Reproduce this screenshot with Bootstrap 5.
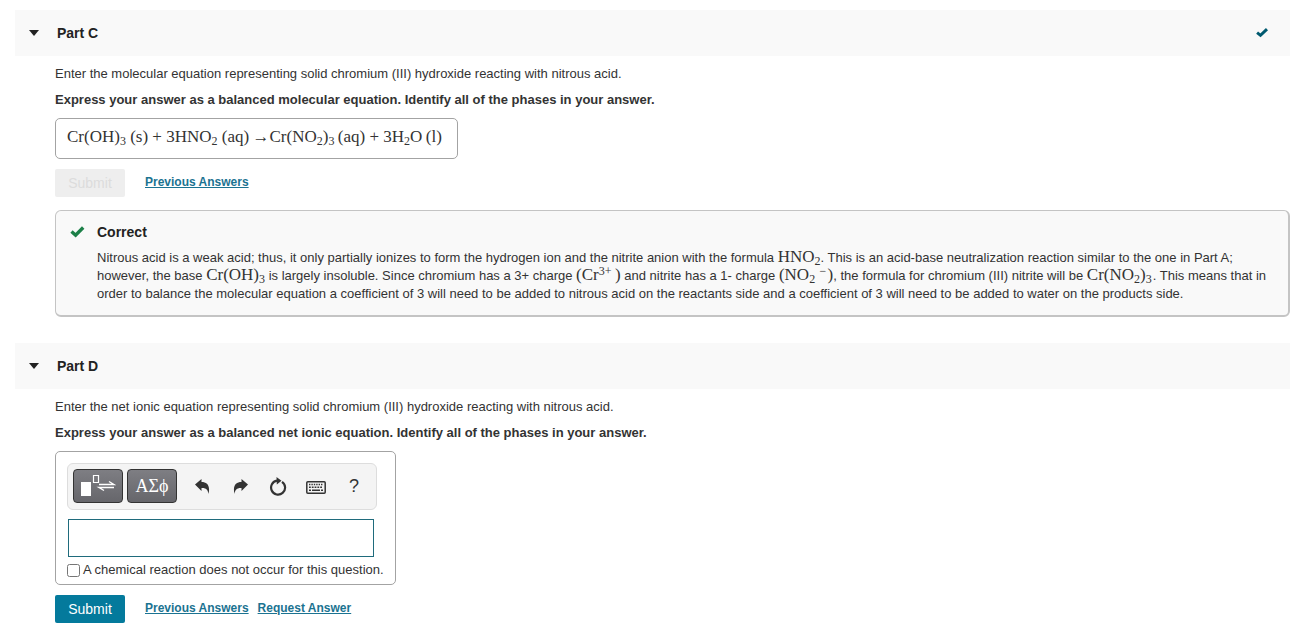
<!DOCTYPE html>
<html lang="en">
<head>
<meta charset="utf-8">
<meta name="viewport" content="width=device-width, initial-scale=1">
<title>Part C and Part D</title>
<link href="https://cdn.jsdelivr.net/npm/bootstrap@5.3.0/dist/css/bootstrap.min.css" rel="stylesheet">
<style>
  body { font-family: "Liberation Sans", Arial, sans-serif; font-size: 13px; line-height: 18px; color: #333; }
  .page { padding: 10px 3px 4px 15px; }
  .part + .part { margin-top: 26px; }
  .part-head { height: 46px; padding: 0 22px 0 14px; gap: 18px; background: #f9f9f9; }
  .part-title { font-size: 14px; line-height: 18px; font-weight: 700; color: #222; }
  .toggle { width: 10px; height: 10px; padding: 0; border: 0; background: transparent; line-height: 0; }
  .part-body { padding: 9px 0 0 40px; }
  .part-body p { margin: 0 0 8px; }
  .framed { margin-top: 9px; border: 1px solid #a3a3a3; border-radius: 5px; background: #fff; }
  .eq { font-family: "Liberation Serif", "Times New Roman", serif; font-size: 17px; line-height: 18px; white-space: nowrap; }
  .eq sub, .eq sup { font-size: 12px; line-height: 0; }
  .eq sub { bottom: -3px; }
  .eq sup { top: -5px; }
  .answer-box { width: fit-content; height: 41px; padding: 0 15px 4px 11px; }
  .actions { margin-top: 10px; gap: 9px; }
  .submit { width: 70px; height: 28px; margin-right: 11px; padding: 0; border: 0; border-radius: 2px; font-size: 14px; line-height: 18px; background: #047a9c; color: #fff; }
  .submit:disabled { background: #eee; color: #dcdcdc; }
  .answer-link { padding-bottom: 2px; font-size: 12px; line-height: 16px; font-weight: 700; color: #1b7391; }
  .feedback { margin-top: 13px; padding: 12px 16px 12px 14px; border: 1px solid #c4c4c4; border-right-width: 2px; border-bottom-width: 2px; border-radius: 6px; background: #f9f9f9; }
  .feedback-head { gap: 12px; }
  .feedback p { margin: 8px 0 0 27px; }
  .feedback .eq { line-height: 14px; }
  .editor { width: fit-content; padding: 11px 11px 5px 11px; }
  .tools { width: 310px; height: 47px; padding: 0 0 2px 5px; border: 1px solid #ddd; border-radius: 6px; background: #f4f4f4; }
  .tool-dark { width: 50px; height: 34px; padding: 0; border: 1px solid #333; border-radius: 4px; background: linear-gradient(#7e7e83, #66666b); color: #fff; font-family: "Liberation Serif", serif; font-size: 18px; line-height: 30px; }
  .tool { width: 38px; height: 34px; padding: 0; border: 0; background: transparent; color: #333; font-size: 18px; line-height: 30px; }
  .tool-icons { margin-left: 6px; }
  .entry { display: block; width: 306px; height: 38px; margin: 9px 0 4px 1px; padding: 0 8px; border: 1px solid #1f6b7c; }
  .no-reaction { gap: 3px; }
  .tick { width: 13px; height: 13px; margin: 0; }
</style>
</head>
<body>
<main class="page">
  <section class="part">
    <header class="part-head d-flex align-items-center">
      <button class="toggle" type="button" aria-label="Collapse Part C"><svg width="10" height="6" viewBox="0 0 10 6"><path d="M0 0h10L5 6z" fill="#222"/></svg></button>
      <h2 class="part-title mb-0">Part C</h2>
      <svg class="ms-auto" width="12" height="10" viewBox="0 0 12 10" aria-label="Complete"><path d="M1.100 4.600 4.500 7.300 11 1.200" fill="none" stroke="#005a70" stroke-width="3"/></svg>
    </header>
    <div class="part-body">
      <p>Enter the molecular equation representing solid chromium (III) hydroxide reacting with nitrous acid.</p>
      <p><strong>Express your answer as a balanced molecular equation. Identify all of the phases in your answer.</strong></p>
      <div class="framed answer-box d-flex align-items-center">
        <span class="eq">Cr(OH)<sub>3</sub> (s) + 3HNO<sub>2</sub> (aq)&#8201;→Cr(NO<sub>2</sub>)<sub>3</sub>&#8201;(aq) + 3H<sub>2</sub>O&#8201;(l)</span>
      </div>
      <div class="actions d-flex align-items-center">
        <button class="submit" type="button" disabled>Submit</button>
        <a class="answer-link" href="#">Previous Answers</a>
      </div>
      <div class="feedback">
        <div class="feedback-head d-flex align-items-center">
          <svg width="15" height="12" viewBox="0 0 15 12" aria-hidden="true"><path d="M1.500 5.500 5.600 9.200 13.200 1.500" fill="none" stroke="#1c8048" stroke-width="3.400"/></svg>
          <h3 class="part-title mb-0">Correct</h3>
        </div>
        <p>Nitrous acid is a weak acid; thus, it only partially ionizes to form the hydrogen ion and the nitrite anion with the formula <span class="eq">HNO<sub>2</sub></span>. This is an acid-base neutralization reaction similar to the one in Part A; however, the base <span class="eq">Cr(OH)<sub>3</sub></span> is largely insoluble. Since chromium has a 3+ charge <span class="eq">(Cr<sup>3+</sup>&#8201;)</span> and nitrite has a 1- charge <span class="eq">(NO<sub>2</sub> <sup>−</sup>&#8202;)</span>, the formula for chromium (III) nitrite will be <span class="eq">Cr(NO<sub>2</sub>)<sub>3</sub></span>&#8202;. This means that in order to balance the molecular equation a coefficient of 3 will need to be added to nitrous acid on the reactants side and a coefficient of 3 will need to be added to water on the products side.</p>
      </div>
    </div>
  </section>

  <section class="part">
    <header class="part-head d-flex align-items-center">
      <button class="toggle" type="button" aria-label="Collapse Part D"><svg width="10" height="6" viewBox="0 0 10 6"><path d="M0 0h10L5 6z" fill="#222"/></svg></button>
      <h2 class="part-title mb-0">Part D</h2>
    </header>
    <div class="part-body">
      <p>Enter the net ionic equation representing solid chromium (III) hydroxide reacting with nitrous acid.</p>
      <p><strong>Express your answer as a balanced net ionic equation. Identify all of the phases in your answer.</strong></p>
      <div class="framed editor">
        <div class="tools d-flex align-items-center">
          <div class="d-flex gap-1">
            <button class="tool-dark" type="button" aria-label="Templates">
              <svg class="d-block mx-auto" width="36" height="26" viewBox="0 0 36 26" fill="none" stroke="#fff"><path d="M1 9h10v14H1z" fill="#fff" stroke="none"/><path d="M13.500 2.500h5v7h-5z" stroke-width="1.200"/><path d="M19 11.500h15L29 8.500M34 14.500H19l5 3" stroke-width="1.400"/></svg>
            </button>
            <button class="tool-dark" type="button" aria-label="Symbols">ΑΣϕ</button>
          </div>
          <div class="tool-icons d-flex">
            <button class="tool" type="button" aria-label="Undo"><svg width="15" height="15" viewBox="0 0 15 15"><path d="M0 5.500 6.500 0v3c5.500 0 9 3.500 7 12-.5-4.500-3-6.500-7-6V12z" fill="#333"/></svg></button>
            <button class="tool" type="button" aria-label="Redo"><svg width="15" height="15" viewBox="0 0 15 15"><path d="M15 5.500 8.500 0v3C3 3 -.5 6.500 1.500 15c.5-4.500 3-6.500 7-6V12z" fill="#333"/></svg></button>
            <button class="tool" type="button" aria-label="Reset"><svg width="18" height="19" viewBox="0 0 18 19"><path d="M13 4.800A7 7 0 1 1 8 3.700" fill="none" stroke="#333" stroke-width="2.200"/><path d="M7.500 0 12.500 3.800 7.800 7.500z" fill="#333"/></svg></button>
            <button class="tool" type="button" aria-label="Keyboard"><svg width="20" height="14" viewBox="0 0 20 14" fill="none" stroke="#333"><rect x=".8" y="1.800" width="18.400" height="11.400" rx="1" stroke-width="1.500"/><path d="M3 4.500h14" stroke-width="1.400" stroke-dasharray="1.400 1"/><path d="M3 7.200h14" stroke-width="1.400" stroke-dasharray="1.800 1"/><path d="M3 10.200h2M6 10.200h8M15 10.200h2" stroke-width="1.400"/></svg></button>
            <button class="tool" type="button" aria-label="Help">?</button>
          </div>
        </div>
        <input class="entry" type="text" aria-label="Net ionic equation">
        <label class="no-reaction d-flex align-items-center"><input class="tick" type="checkbox"><span>A chemical reaction does not occur for this question.</span></label>
      </div>
      <div class="actions d-flex align-items-center">
        <button class="submit" type="button">Submit</button>
        <a class="answer-link" href="#">Previous Answers</a>
        <a class="answer-link" href="#">Request Answer</a>
      </div>
    </div>
  </section>
</main>
<script src="https://cdn.jsdelivr.net/npm/bootstrap@5.3.0/dist/js/bootstrap.bundle.min.js"></script>
</body>
</html>
